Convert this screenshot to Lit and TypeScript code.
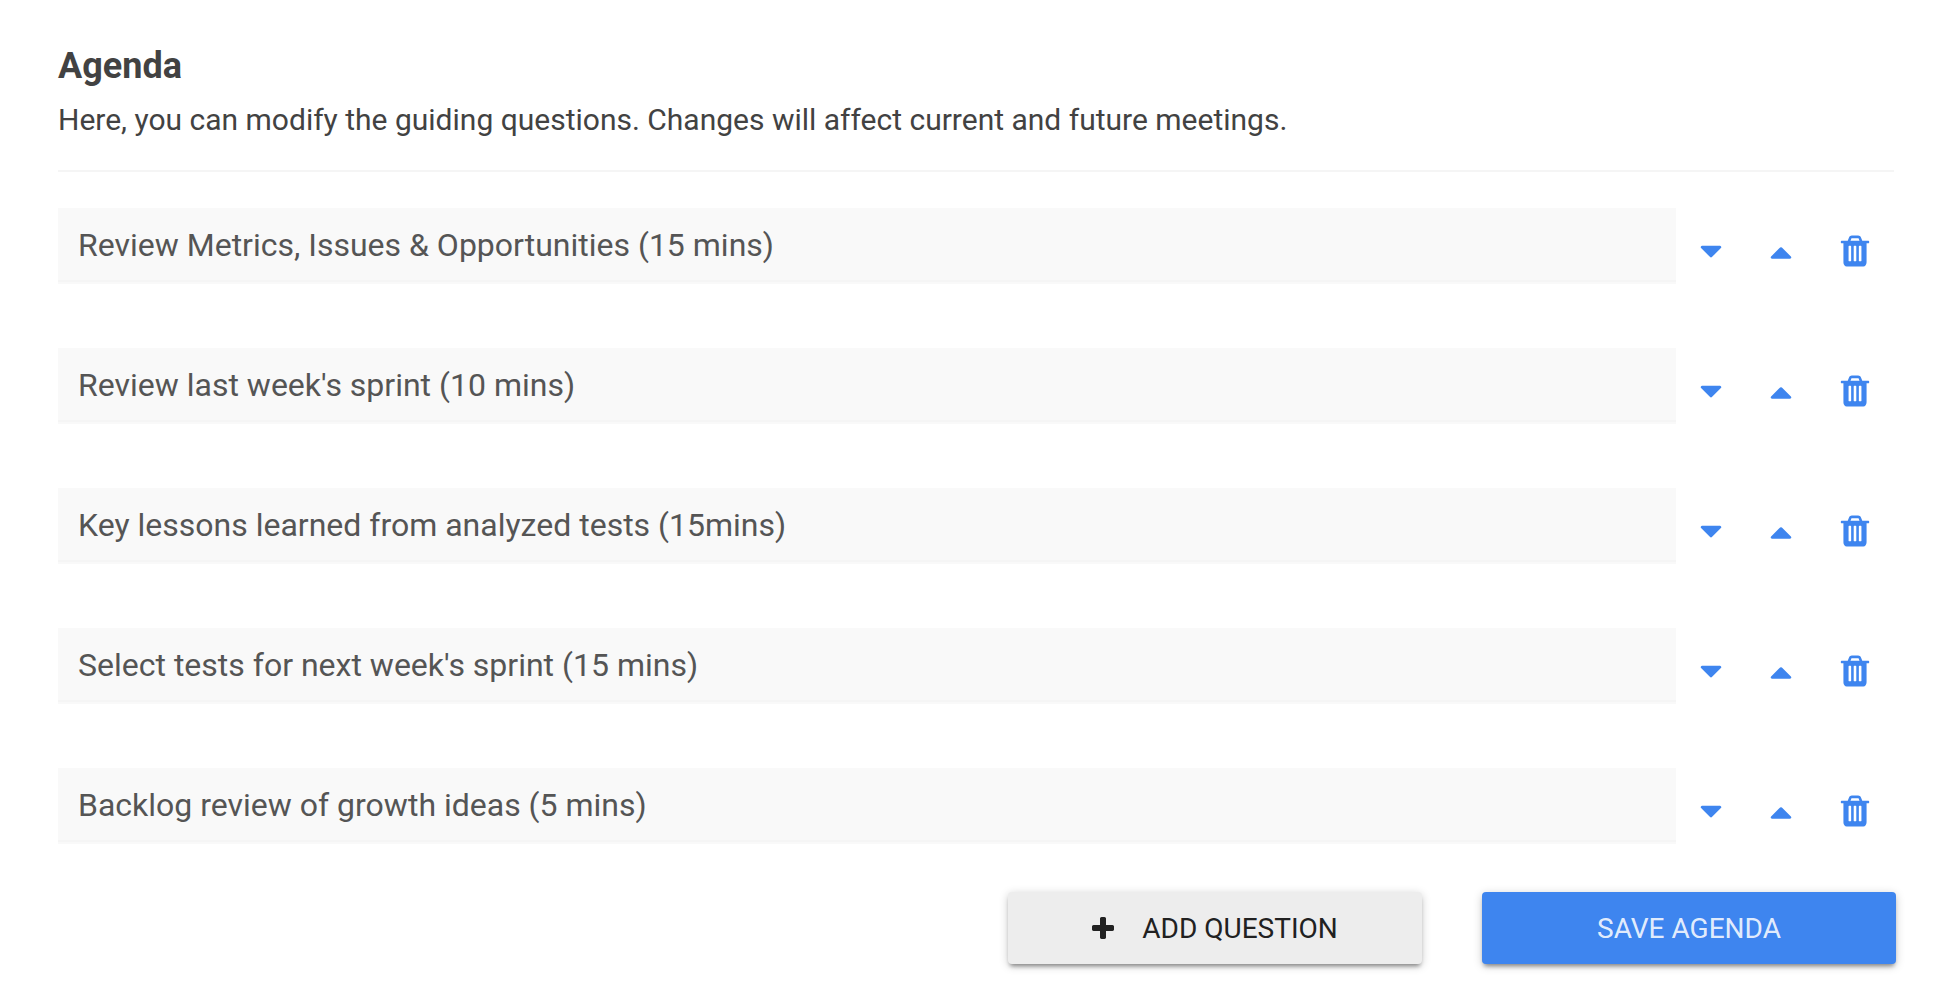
import { LitElement, html, css, svg } from "lit";
import { customElement, state, property } from "lit/decorators.js";

const ICONS = {
  down: "M1408 704q0 26-19 45l-448 448q-19 19-45 19t-45-19l-448-448q-19-19-19-45t19-45 45-19h896q26 0 45 19t19 45z",
  up: "M1408 1216q0 26-19 45t-45 19h-896q-26 0-45-19t-19-45 19-45l448-448q19-19 45-19t45 19l448 448q19 19 19 45z",
  trash:
    "M704 1376v-704q0-14-9-23t-23-9h-64q-14 0-23 9t-9 23v704q0 14 9 23t23 9h64q14 0 23-9t9-23zm256 0v-704q0-14-9-23t-23-9h-64q-14 0-23 9t-9 23v704q0 14 9 23t23 9h64q14 0 23-9t9-23zm256 0v-704q0-14-9-23t-23-9h-64q-14 0-23 9t-9 23v704q0 14 9 23t23 9h64q14 0 23-9t9-23zm-544-992h448l-48-117q-7-9-17-11h-317q-10 2-17 11zm928 32v64q0 14-9 23t-23 9h-96v948q0 83-47 143.500t-113 60.500h-832q-66 0-113-58.500t-47-141.500v-952h-96q-14 0-23-9t-9-23v-64q0-14 9-23t23-9h309l70-167q15-37 54-63t79-26h320q40 0 79 26t54 63l70 167h309q14 0 23 9t9 23z",
  plus: "M1600 736v192q0 40-28 68t-68 28h-416v416q0 40-28 68t-68 28h-192q-40 0-68-28t-28-68v-416h-416q-40 0-68-28t-28-68v-192q0-40 28-68t68-28h416v-416q0-40 28-68t68-28h192q40 0 68 28t28 68v416h416q40 0 68 28t28 68z",
};

const shape = (name: keyof typeof ICONS) => svg`<path d=${ICONS[name]} />`;

@customElement("agenda-row")
class AgendaRow extends LitElement {
  @property() value = "";
  @property({ type: Number }) index = 0;

  static styles = css`
    :host {
      display: grid;
      grid-template-columns: minmax(0, 1fr) 70px 70px 78px;
    }
    .field {
      padding-bottom: 2px;
      background: #f9f9f9;
    }
    .text {
      display: block;
      box-sizing: border-box;
      width: 100%;
      height: 74px;
      margin: 0;
      padding: 2px 20px 0;
      border: 0;
      border-bottom: 2px solid #f5f5f5;
      border-radius: 0;
      outline: none;
      background: transparent;
      color: #555;
      font: 400 32px Roboto, sans-serif;
    }
    .icon-button {
      display: flex;
      align-items: center;
      justify-content: center;
      margin: 0;
      padding: 10px 0 0;
      border: 0;
      background: none;
      color: #3e85ef;
      cursor: pointer;
    }
    .icon {
      width: 36px;
      height: 36px;
      fill: currentColor;
    }
  `;

  private emit(action: string) {
    this.dispatchEvent(new CustomEvent("row-action", { detail: { action, index: this.index } }));
  }

  private button(icon: "down" | "up" | "trash", label: string) {
    return html`<button class="icon-button" type="button" aria-label=${label} @click=${() => this.emit(icon)}>
      <svg class="icon" viewBox="0 0 1792 1792" aria-hidden="true">${shape(icon)}</svg>
    </button>`;
  }

  render() {
    return html`
      <div class="field">
        <input class="text" type="text" aria-label="Question ${this.index + 1}" .value=${this.value} />
      </div>
      ${this.button("down", "Move down")} ${this.button("up", "Move up")} ${this.button("trash", "Delete")}
    `;
  }
}

@customElement("app-root")
class AppRoot extends LitElement {
  @state() private questions = [
    "Review Metrics, Issues & Opportunities (15 mins)",
    "Review last week's sprint (10 mins)",
    "Key lessons learned from analyzed tests (15mins)",
    "Select tests for next week's sprint (15 mins)",
    "Backlog review of growth ideas (5 mins)",
  ];

  static styles = css`
    :host {
      display: block;
      padding: 44px 38px 34px 58px;
      background: #fff;
      color: #424242;
      font-family: Roboto, sans-serif;
    }
    .header {
      margin-right: 2px;
      padding-bottom: 30px;
      border-bottom: 2px solid #f5f5f5;
    }
    .title {
      margin: 0;
      font-size: 36px;
      font-weight: 700;
      line-height: 44px;
    }
    .intro {
      margin: 12px 0 0;
      font-size: 30px;
      line-height: 40px;
    }
    .rows {
      display: grid;
      gap: 64px;
      margin: 36px 2px 48px 0;
    }
    .actions {
      display: flex;
      justify-content: flex-end;
      gap: 60px;
    }
    .action {
      display: flex;
      align-items: center;
      justify-content: center;
      gap: 28px;
      width: 414px;
      height: 72px;
      margin: 0;
      padding: 0 16px;
      border: 0;
      border-radius: 4px;
      background: #ededed;
      color: #212121;
      font: 400 28px Roboto, sans-serif;
      text-transform: uppercase;
      box-shadow: 0 4px 4px -2px rgba(0, 0, 0, 0.4), 0 2px 10px rgba(0, 0, 0, 0.2);
      cursor: pointer;
    }
    .primary {
      background: #3e85ef;
      color: rgba(255, 255, 255, 0.87);
    }
    .plus {
      width: 22px;
      height: 22px;
      fill: currentColor;
    }
  `;

  private onRow(e: CustomEvent) {
    const { action, index } = e.detail;
    const list = [...this.questions];
    const [item] = list.splice(index, 1);
    if (action === "up") list.splice(Math.max(0, index - 1), 0, item);
    if (action === "down") list.splice(index + 1, 0, item);
    this.questions = list;
  }

  render() {
    return html`
      <header class="header">
        <h1 class="title">Agenda</h1>
        <p class="intro">Here, you can modify the guiding questions. Changes will affect current and future meetings.</p>
      </header>
      <div class="rows">
        ${this.questions.map(
          (q, i) => html`<agenda-row .value=${q} .index=${i} @row-action=${this.onRow}></agenda-row>`
        )}
      </div>
      <div class="actions">
        <button class="action" type="button" @click=${() => (this.questions = [...this.questions, ""])}>
          <svg class="plus" viewBox="192 128 1408 1408" aria-hidden="true">${shape("plus")}</svg>
          <span>Add question</span>
        </button>
        <button class="action primary" type="button">Save agenda</button>
      </div>
    `;
  }
}
